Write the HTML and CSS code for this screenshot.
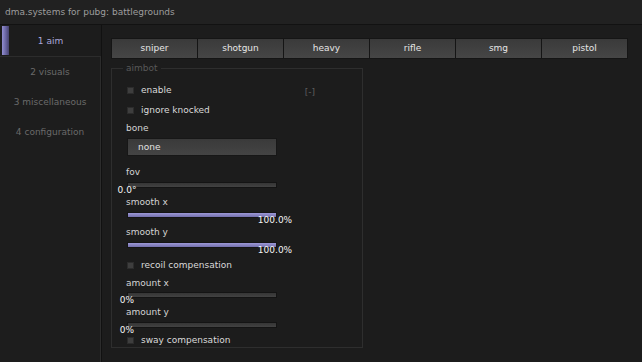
FILE: index.html
```html
<!DOCTYPE html>
<html>
<head>
<meta charset="utf-8">
<link rel="stylesheet" href="styles.css">
</head>
<body>
<div class="window">
  <div class="titlebar">dma.systems for pubg: battlegrounds</div>
  <div class="main">
    <nav class="sidebar">
      <div class="nav-active"><span class="accent"></span><span class="nav-text">1 aim</span></div>
      <div class="nav-panel">
        <div class="nav-item">2 visuals</div>
        <div class="nav-item">3 miscellaneous</div>
        <div class="nav-item">4 configuration</div>
      </div>
    </nav>
    <section class="content">
      <div class="tabs">
        <div class="tab">sniper</div>
        <div class="tab">shotgun</div>
        <div class="tab">heavy</div>
        <div class="tab">rifle</div>
        <div class="tab">smg</div>
        <div class="tab">pistol</div>
      </div>
      <div class="group">
        <span class="group-title">aimbot</span>
        <div class="check first"><span class="box"></span><span class="check-label">enable</span><span class="collapse">[-]</span></div>
        <div class="check mt6"><span class="box"></span><span class="check-label">ignore knocked</span></div>
        <div class="label mt4">bone</div>
        <div class="combo">none</div>
        <div class="label mt9">fov</div>
        <div class="slider"><span class="value" style="left:0%">0.0°</span></div>
        <div class="label mt7">smooth x</div>
        <div class="slider"><span class="fill" style="width:100%"></span><span class="value" style="left:100%">100.0%</span></div>
        <div class="label mt7">smooth y</div>
        <div class="slider"><span class="fill" style="width:100%"></span><span class="value" style="left:100%">100.0%</span></div>
        <div class="check mt10"><span class="box"></span><span class="check-label">recoil compensation</span></div>
        <div class="label mt4">amount x</div>
        <div class="slider mt2"><span class="value" style="left:0%">0%</span></div>
        <div class="label mt7">amount y</div>
        <div class="slider"><span class="value" style="left:0%">0%</span></div>
        <div class="check mt5"><span class="box"></span><span class="check-label">sway compensation</span></div>
      </div>
    </section>
  </div>
</div>
</body>
</html>
```
FILE: styles.css
```css
* { box-sizing: border-box; }
html, body {
  margin: 0;
  padding: 0;
  background: #1c1c1c;
  overflow: hidden;
}
body {
  font-family: "DejaVu Sans", Verdana, sans-serif;
  font-size: 9px;
  color: #d6d6d6;
}
.window {
  width: 642px;
  height: 362px;
  display: flex;
  flex-direction: column;
  background: #1c1c1c;
}
.titlebar {
  height: 25px;
  line-height: 24px;
  padding-left: 5px;
  background: #212121;
  border-bottom: 1px solid #121212;
  color: #9e9e9e;
}
.main {
  flex: 1;
  display: flex;
}
.sidebar {
  width: 101px;
  display: flex;
  flex-direction: column;
}
.nav-active {
  height: 31px;
  display: flex;
  align-items: center;
  padding: 1px 0 1px 2px;
}
.accent {
  width: 7px;
  align-self: stretch;
  background: linear-gradient(to right, #928ed2, #5c5890 70%, #46436c);
}
.nav-text {
  flex: 1;
  text-align: center;
  color: #aaa7da;
  margin-right: 9px;
  margin-top: 1px;
}
.nav-panel {
  flex: 1;
  border-top: 1px solid #2c2c2c;
  border-right: 1px solid #2c2c2c;
  background: #1d1d1d;
}
.nav-item {
  height: 30px;
  line-height: 30px;
  text-align: center;
  color: #6a6a6a;
}
.content {
  flex: 1;
  border-left: 1px solid #111111;
  padding: 13px 14px 0 9px;
}
.tabs {
  display: flex;
  height: 21px;
}
.tab {
  flex: 1;
  text-align: center;
  line-height: 19px;
  color: #e6e6e6;
  background: linear-gradient(to bottom, #3a3a3a, #464646);
  border: 1px solid #151515;
  margin-left: -1px;
}
.tab:first-child { margin-left: 0; }
.group {
  position: relative;
  margin-top: 9px;
  width: 252px;
  height: 280px;
  border: 1px solid #2e2e2e;
  padding: 14px 0 0 15px;
}
.group-title {
  position: absolute;
  left: 11px;
  top: -8px;
  padding: 0 3px;
  line-height: 14px;
  background: #1c1c1c;
  color: #585858;
}
.check {
  height: 14px;
  display: flex;
  align-items: center;
}
.box {
  width: 7px;
  height: 7px;
  background: #3e3e3e;
  border: 1px solid #2c2c2c;
  margin-right: 7px;
}
.check-label {
  line-height: 14px;
  color: #dadada;
}
.collapse {
  margin-left: auto;
  margin-right: 47px;
  margin-top: 4px;
  color: #5e5e5e;
  line-height: 14px;
}
.label {
  height: 14px;
  line-height: 14px;
  margin-left: -1px;
  color: #d4d4d4;
}
.combo {
  margin-top: 3px;
  width: 150px;
  height: 18px;
  line-height: 16px;
  padding-left: 10px;
  color: #e2e2e2;
  background: linear-gradient(to bottom, #3a3a3a, #444444);
  border: 1px solid #171717;
}
.slider {
  position: relative;
  margin-top: 3px;
  width: 150px;
  height: 6px;
  background: linear-gradient(to bottom, #353535, #424242);
  border: 1px solid #141414;
}
.slider.mt2 { margin-top: 2px; }
.fill {
  display: block;
  height: 100%;
  background: linear-gradient(to bottom, #9c98d6, #7470ac);
}
.value {
  position: absolute;
  top: 2px;
  transform: translateX(-50%);
  margin-left: -1px;
  line-height: 11px;
  color: #f4f4f4;
  white-space: nowrap;
}
.mt2 { margin-top: 2px; }
.mt4 { margin-top: 4px; }
.mt5 { margin-top: 5px; }
.mt6 { margin-top: 6px; }
.mt7 { margin-top: 7px; }
.mt9 { margin-top: 9px; }
.mt10 { margin-top: 10px; }
```
